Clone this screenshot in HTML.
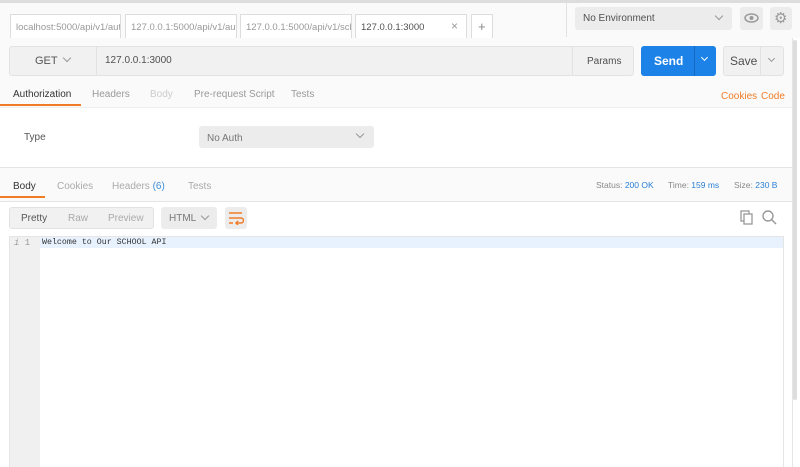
<!DOCTYPE html>
<html><head><style>
*{box-sizing:border-box;margin:0;padding:0}
body{width:800px;height:467px;overflow:hidden;background:#fff;font-family:"Liberation Sans",sans-serif;font-size:10px;color:#505050;position:relative}
.a{position:absolute}
.tab{position:absolute;top:14px;height:24px;border:1px solid #ddd;border-bottom:none;background:#fff;color:#999;padding:7px 5px;white-space:nowrap;overflow:hidden;font-size:9.5px}
.btn{position:absolute;background:#ececec;border-radius:3px}
.chev{position:absolute;width:6px;height:6px;border-right:1px solid #999;border-bottom:1px solid #999;transform:rotate(45deg)}
.t{position:absolute;font-size:10px}
</style></head><body>
<div class="a" style="left:0;top:0;width:800px;height:3px;background:#ddd"></div>
<div class="a" style="left:0;top:3px;width:800px;height:35px;background:#fafafa"></div>
<div class="a" style="left:566px;top:3px;width:1px;height:34px;background:#e2e2e2"></div>
<div class="tab" style="left:10px;width:111px">localhost:5000/api/v1/auth/</div>
<div class="tab" style="left:125px;width:112px">127.0.0.1:5000/api/v1/auth/</div>
<div class="tab" style="left:240px;width:112px">127.0.0.1:5000/api/v1/schoo</div>
<div class="tab" style="left:355px;width:112px;color:#505050">127.0.0.1:3000<span style="position:absolute;right:8px;color:#999;font-size:12px;top:4px">×</span></div>
<div class="tab" style="left:471px;width:22px;color:#888;font-size:13px;padding:4px 6px">+</div>
<div class="btn" style="left:575px;top:7px;width:157px;height:23px"></div>
<div class="t" style="left:583px;top:13px">No Environment</div>
<div class="chev" style="left:716px;top:13px"></div>
<div class="btn" style="left:740px;top:7px;width:23px;height:23px"></div>
<svg class="a" style="left:744px;top:12px" width="15" height="12" viewBox="0 0 15 12"><ellipse cx="7.5" cy="6" rx="6.5" ry="4" fill="none" stroke="#999" stroke-width="1.5"/><circle cx="7.5" cy="6" r="2" fill="#999"/></svg>
<div class="btn" style="left:770px;top:7px;width:22px;height:23px"></div>
<div class="a" style="left:774px;top:9px;font-size:15px;color:#999">⚙</div>
<div class="a" style="left:0;top:38px;width:793px;height:130px;background:#fafafa"></div>
<div class="a" style="left:0;top:107px;width:793px;height:61px;background:#fff;border-top:1px solid #eee;border-bottom:1px solid #e5e5e5"></div>
<div class="btn" style="left:9px;top:46px;width:625px;height:30px;border:1px solid #e2e2e2;background:#f1f1f1"></div>
<div class="a" style="left:96px;top:46px;width:1px;height:30px;background:#e2e2e2"></div>
<div class="a" style="left:572px;top:46px;width:1px;height:30px;background:#e2e2e2"></div>
<div class="t" style="left:35px;top:55px;font-size:11px;color:#555">GET</div>
<div class="chev" style="left:64px;top:55px"></div>
<div class="t" style="left:105px;top:55px">127.0.0.1:3000</div>
<div class="t" style="left:587px;top:56px">Params</div>
<div class="a" style="left:641px;top:46px;width:75px;height:30px;background:#1c82e8;border-radius:3px"></div>
<div class="a" style="left:694px;top:46px;width:1px;height:30px;background:#1569c0"></div>
<div class="t" style="left:654px;top:54px;color:#fff;font-weight:bold;font-size:12px">Send</div>
<div class="chev" style="left:702px;top:55px;border-color:#fff;width:5px;height:5px"></div>
<div class="btn" style="left:723px;top:46px;width:61px;height:30px;border:1px solid #e2e2e2;background:#f1f1f1"></div>
<div class="a" style="left:760px;top:46px;width:1px;height:30px;background:#e2e2e2"></div>
<div class="t" style="left:730px;top:54px;font-size:12px">Save</div>
<div class="chev" style="left:769px;top:56px;width:5px;height:5px"></div>
<div class="t" style="left:13px;top:89px;color:#333">Authorization</div>
<div class="a" style="left:0;top:104px;width:81px;height:2px;background:#f07c27"></div>
<div class="t" style="left:92px;top:89px;color:#999">Headers</div>
<div class="t" style="left:150px;top:89px;color:#ccc">Body</div>
<div class="t" style="left:194px;top:89px;color:#999">Pre-request Script</div>
<div class="t" style="left:291px;top:89px;color:#999">Tests</div>
<div class="t" style="left:721px;top:91px;color:#f07c27">Cookies</div>
<div class="t" style="left:761px;top:91px;color:#f07c27">Code</div>
<div class="t" style="left:24px;top:132px;color:#555">Type</div>
<div class="btn" style="left:199px;top:126px;width:175px;height:22px"></div>
<div class="t" style="left:207px;top:133px;color:#777">No Auth</div>
<div class="chev" style="left:357px;top:131px"></div>
<div class="a" style="left:0;top:168px;width:793px;height:34px;background:#fafafa;border-bottom:1px solid #e5e5e5"></div>
<div class="t" style="left:13px;top:181px;color:#333">Body</div>
<div class="a" style="left:0;top:196px;width:45px;height:2px;background:#f07c27"></div>
<div class="t" style="left:57px;top:181px;color:#aaa">Cookies</div>
<div class="t" style="left:112px;top:181px;color:#aaa">Headers <span style="color:#3b8ed8">(6)</span></div>
<div class="t" style="left:188px;top:181px;color:#aaa">Tests</div>
<div class="t" style="left:596px;top:180px;font-size:8.5px;color:#888">Status: <span style="color:#2a7fd4">200 OK</span></div>
<div class="t" style="left:668px;top:180px;font-size:8.5px;color:#888">Time: <span style="color:#2a7fd4">159 ms</span></div>
<div class="t" style="left:734px;top:180px;font-size:8.5px;color:#888">Size: <span style="color:#2a7fd4">230 B</span></div>
<div class="btn" style="left:9px;top:207px;width:145px;height:22px;border:1px solid #e2e2e2;background:#f1f1f1"></div>
<div class="t" style="left:21px;top:213px;color:#555">Pretty</div>
<div class="t" style="left:68px;top:213px;color:#aaa">Raw</div>
<div class="t" style="left:108px;top:213px;color:#aaa">Preview</div>
<div class="btn" style="left:161px;top:207px;width:56px;height:22px"></div>
<div class="t" style="left:169px;top:213px;color:#777">HTML</div>
<div class="chev" style="left:202px;top:213px"></div>
<div class="btn" style="left:225px;top:207px;width:22px;height:22px"></div>
<svg class="a" style="left:228px;top:211px" width="16" height="14" viewBox="0 0 16 14"><path d="M1 2h13M1 7h12a2.5 2.5 0 0 1 0 5H8M10 10l-2 2 2 2M1 12h4" fill="none" stroke="#f07c27" stroke-width="1.5"/></svg>
<svg class="a" style="left:740px;top:210px" width="14" height="15" viewBox="0 0 14 15"><rect x="1" y="1" width="8" height="10" fill="none" stroke="#999" stroke-width="1.3"/><rect x="4" y="4" width="8" height="10" fill="#fff" stroke="#999" stroke-width="1.3"/></svg>
<svg class="a" style="left:762px;top:210px" width="15" height="15" viewBox="0 0 15 15"><circle cx="6" cy="6" r="5" fill="none" stroke="#999" stroke-width="1.4"/><path d="M9.5 9.5L14 14" stroke="#999" stroke-width="1.5"/></svg>
<div class="a" style="left:9px;top:236px;width:775px;height:231px;border:1px solid #e5e5e5;border-bottom:none"></div>
<div class="a" style="left:10px;top:237px;width:30px;height:230px;background:#f0f0f0"></div>
<div class="a" style="left:40px;top:237px;width:743px;height:11px;background:#e8f2fe"></div>
<div class="t" style="left:14px;top:238px;font-family:'Liberation Mono',monospace;font-size:9px;color:#999"><i>i</i> 1</div>
<div class="t" style="left:42px;top:238px;font-family:'Liberation Mono',monospace;font-size:8.3px;color:#333">Welcome to Our SCHOOL API</div>
<div class="a" style="left:792px;top:38px;width:1px;height:429px;background:#e5e5e5"></div>
<div class="a" style="left:793px;top:40px;width:4px;height:360px;background:#ddd;border-radius:2px"></div>
</body></html>
